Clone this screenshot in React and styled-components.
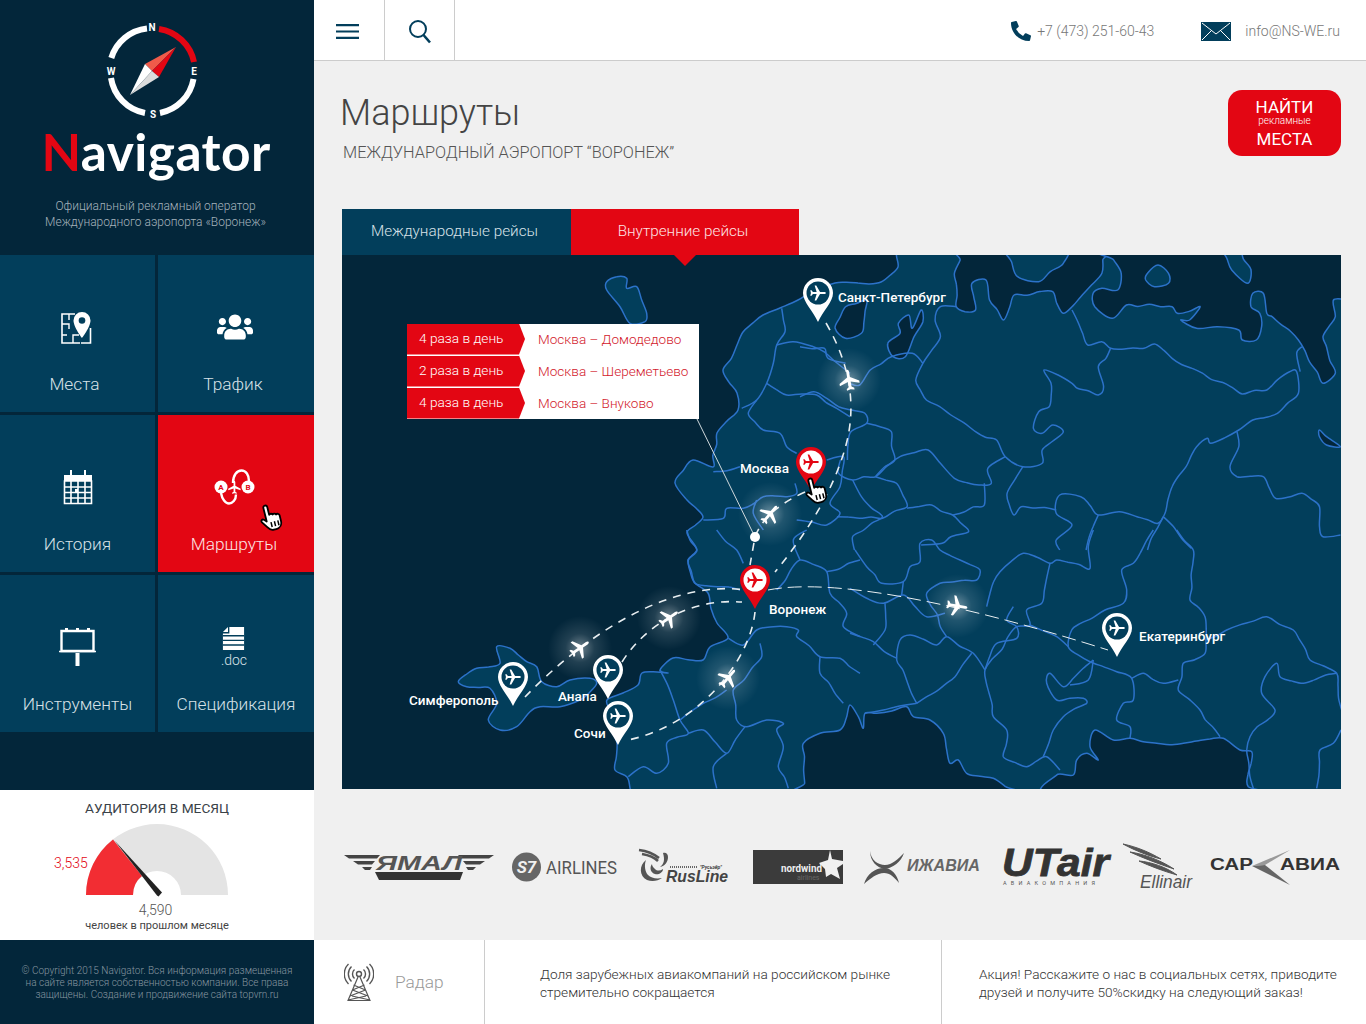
import React from "react";
import styled, { createGlobalStyle } from "styled-components";
import { FaUsers, FaPhoneAlt } from "react-icons/fa";

const NAVY = "#03263a";
const TEAL = "#023e5b";
const RED = "#e30613";
const BORDER = "#2c72c9";

const GlobalStyle = createGlobalStyle`
  html, body { margin: 0; padding: 0; background: #f0f0f0; }
  body { font-family: Roboto, "Liberation Sans", sans-serif; }
  * { box-sizing: border-box; }
`;

/* ---------- map geometry: points were read off zoomed crops, mapped back to page px ---------- */
const frame = (ox, oy, sx = 1 / 3, sy = 1 / 3) => (flat) => {
  const out = [];
  for (let i = 0; i < flat.length; i += 2) out.push([ox + flat[i] * sx, oy + flat[i + 1] * sy]);
  return out;
};
const f6 = frame(340, 200);
const f7 = frame(800, 250, 0.351);
const f8 = frame(340, 530);
const f9 = frame(850, 530);
const page = frame(0, 0, 1, 1);

// borders in the picture are wobbly, so long segments get small repeatable kinks
const noise = (x, y) => {
  const s = Math.sin(x * 12.9898 + y * 78.233) * 43758.5453;
  return (s - Math.floor(s)) * 2 - 1;
};
const rough = (pts) => {
  const out = [];
  pts.forEach((p, i) => {
    out.push(p);
    const q = pts[i + 1];
    if (!q) return;
    const dx = q[0] - p[0], dy = q[1] - p[1];
    const len = Math.hypot(dx, dy);
    const n = Math.floor(len / 11);
    for (let k = 1; k < n; k++) {
      const t = k / n;
      const x = p[0] + dx * t, y = p[1] + dy * t;
      const o = noise(x, y) * 1.7;
      out.push([x - (dy / len) * o, y + (dx / len) * o]);
    }
  });
  return out;
};

const smooth = (raw, close) => {
  const p = rough(raw);
  let d = `M${p[0][0].toFixed(1)} ${p[0][1].toFixed(1)}`;
  const n = p.length;
  const at = (i) => (close ? p[(i + n) % n] : p[Math.max(0, Math.min(n - 1, i))]);
  const last = close ? n : n - 1;
  for (let i = 0; i < last; i++) {
    const a = at(i - 1), b = at(i), c = at(i + 1), e = at(i + 2);
    const c1x = b[0] + (c[0] - a[0]) / 6, c1y = b[1] + (c[1] - a[1]) / 6;
    const c2x = c[0] - (e[0] - b[0]) / 6, c2y = c[1] - (e[1] - b[1]) / 6;
    d += `C${c1x.toFixed(1)} ${c1y.toFixed(1)} ${c2x.toFixed(1)} ${c2y.toFixed(1)} ${c[0].toFixed(1)} ${c[1].toFixed(1)}`;
  }
  return close ? d + "Z" : d;
};

const sea = [
  page([330,245, 896,245, 898,267, 881,282, 835,283, 815,290, 798,300, 780,308, 763,315, 743,332, 737,345, 723,370, 737,393, 738,410, 717,433, 713,467, 693,460, 675,483, 687,500, 703,517, 687,533, 697,550, 688,560, 695,583, 708,593, 717,623, 728,638, 710,647, 703,660, 673,658, 660,670, 668,673, 657,672, 642,673, 638,685, 623,693, 607,700, 617,743, 615,770, 627,777, 632,800, 330,800]),
  f7([470,-10, 440,70, 445,170, 470,185, 500,180, 490,100, 530,90, 540,150, 580,210, 610,135, 720,125, 750,190, 800,140, 860,70, 860,-10]),
  f7([870,-10, 915,70, 905,120, 860,115, 835,130, 840,170, 890,205, 930,165, 1060,170, 1075,190, 1140,170, 1110,210, 1085,210, 1130,235, 1190,230, 1250,240, 1260,270, 1300,270, 1315,230, 1310,190, 1285,170, 1290,130, 1320,130, 1330,190, 1345,200, 1420,270, 1490,400, 1525,370, 1500,290, 1490,260, 1525,200, 1520,150, 1560,145, 1560,-10]),
  f8([1395,800, 1390,640, 1440,610, 1500,600, 1530,525, 1555,560, 1570,595, 1575,550, 1610,550, 1700,530, 1720,560, 1770,570, 1810,610, 1830,700, 1855,690, 1880,730, 1960,745, 2030,800]),
  f9([620,800, 620,735, 670,735, 680,690, 710,670, 745,690, 720,650, 735,600, 790,630, 840,625, 920,640, 1000,640, 1120,625, 1170,660, 1205,665, 1195,770, 1250,800]),
  f7([100,235, 130,170, 190,150, 175,250, 130,265]),
  f7([250,280, 285,250, 280,220, 310,195, 320,235, 345,180, 350,215, 325,260, 300,320, 265,320]),
  f7([1480,540, 1500,560, 1540,590, 1500,585, 1480,560]),
];

const land = [
  f7([590,-10, 620,80, 680,95, 750,40, 755,-10]),
  f7([990,70, 1020,45, 1050,70, 1050,100, 1010,110, 985,90]),
  f7([1200,-10, 1230,60, 1275,100, 1285,60, 1250,-10]),
  f6([800,245, 830,230, 860,235, 860,265, 890,260, 905,300, 920,340, 915,365, 870,370, 840,320, 800,270]),
  f8([470,350, 510,355, 535,375, 560,395, 590,410, 605,455, 650,470, 690,450, 750,445, 770,460, 720,510, 660,530, 600,530, 570,545, 530,590, 480,600, 445,570, 470,520, 450,475, 380,470, 355,455, 410,415, 480,400]),
];

const borders = [
  f7([775,180, 820,285, 860,275, 885,295, 980,295, 1010,282, 1060,325, 1260,432, 1330,420, 1395,365, 1415,365, 1420,430, 1360,490, 1290,510, 1250,540, 1170,580, 1160,565, 1130,590, 1100,650, 1060,710, 1040,790, 1020,820, 960,800, 910,785, 850,795, 800,740, 740,735, 730,790, 775,825, 730,870, 740,900]),
  f7([445,170, 400,170, 385,210, 400,260, 350,340, 330,390, 360,450, 430,495, 500,545, 560,570, 585,620, 635,650, 690,640, 690,600, 750,545, 720,525, 690,550, 665,535, 680,485, 710,470, 715,400, 695,360, 775,400, 790,415, 850,435, 865,410, 850,350, 885,295]),
  f7([350,340, 320,310, 260,320, 200,360, 170,405, 140,400]),
  f7([585,620, 535,655, 545,700, 510,705, 440,685, 400,640, 365,600, 285,620, 215,680, 150,690, 110,670, 115,630]),
  f7([0,290, 70,295, 80,325, 130,340]),
  f7([0,440, 40,425, 110,470, 185,490, 190,520, 145,545, 135,630]),
  f7([190,520, 260,545, 270,630, 215,680]),
  f7([150,690, 175,740, 235,800, 150,860, 155,900]),
  f7([215,680, 275,700, 305,770, 235,805, 105,800]),
  f7([305,775, 375,765, 435,795, 480,845, 430,860, 405,880, 345,885]),
  f7([435,795, 525,765, 525,700]),
  f7([635,650, 590,730, 610,795, 630,770, 730,780]),
  f7([850,795, 815,900]),
  f7([1035,800, 990,900]),
  f7([1035,800, 1115,895]),
  f7([1430,290, 1415,310, 1425,365]),
  f7([1245,545, 1250,590, 1225,650, 1245,680, 1320,680, 1355,745, 1430,730, 1480,770, 1480,830, 1490,860, 1540,855]),
  f9([910,0, 850,100, 815,120, 830,180, 820,220, 765,240, 725,265, 665,300, 655,350, 720,395, 800,425, 845,445, 850,510, 820,520, 800,570, 840,590, 840,625]),
  f9([980,0, 1030,60, 1020,210, 1065,260, 1065,370, 1000,400, 985,480, 1050,540, 1110,620]),
  f9([1065,330, 1130,300, 1250,260, 1330,300, 1380,390, 1460,430, 1475,540]),
  f9([845,445, 880,430, 940,460, 985,450]),
  f9([1460,430, 1360,460, 1290,440, 1280,400, 1245,440, 1235,490, 1275,540, 1200,620, 1190,660, 1210,775]),
  f9([730,0, 715,50, 720,115, 620,90, 600,100, 520,70, 450,125, 420,190, 410,230]),
  f9([600,100, 575,220, 530,240, 540,285, 500,290, 405,420, 430,560, 470,600, 460,680, 530,710, 590,680, 630,720]),
  f9([540,285, 620,320, 655,350]),
  f9([490,230, 470,270, 500,290, 500,325, 440,340, 405,420]),
  f9([405,420, 370,370, 290,320, 260,345, 180,315, 150,330, 140,390, 200,520]),
  f9([290,320, 230,190, 270,160, 380,150, 390,120, 270,60, 245,30, 210,40, 210,95, 180,110, 160,155, 95,160, 50,110, 15,60]),
  f9([0,310, 70,335, 140,385]),
  f9([105,220, 105,300, 70,345]),
  f9([200,520, 315,440, 365,370]),
  f9([200,520, 100,540, 45,550]),
  f9([0,175, 50,205, 100,220, 160,195, 230,260, 285,250]),
  f9([160,155, 155,195]),
  f9([730,390, 640,470, 600,430, 590,460, 620,510, 700,505, 710,520, 640,560, 610,600, 580,680]),
  f9([730,390, 715,450, 660,465]),
  f9([1473,600, 1450,640, 1410,660, 1400,775]),
  f8([1040,0, 1070,60, 1045,90, 1065,160, 1200,180]),
  f8([1130,0, 1190,60, 1210,100]),
  f8([1260,340, 1265,380, 1180,480, 1190,570, 1220,590, 1280,570, 1330,580, 1310,600, 1330,650, 1315,710, 1345,775]),
  f8([1165,325, 1210,345, 1250,300, 1300,290, 1340,290, 1375,300, 1370,320, 1440,380, 1500,385, 1560,430]),
  f8([1440,380, 1440,430, 1510,520]),
  f8([1310,180, 1380,90, 1460,125, 1470,190, 1520,250, 1510,290, 1560,320]),
  f8([1460,125, 1560,90]),
  f8([1380,90, 1360,30, 1400,0]),
  f8([960,420, 1000,510, 1020,570, 1045,610, 980,640, 985,700, 950,730, 910,710, 865,740]),
  f8([1045,610, 1090,600, 1160,670, 1215,590]),
  f8([1160,670, 1120,710, 1130,775]),
  f8([1020,570, 1090,520, 1160,480]),
  f6([1325,325, 1335,395, 1310,435, 1300,490, 1280,550, 1250,600, 1205,625]),
  f6([1310,435, 1360,425, 1420,440, 1480,480, 1530,520]),
  f6([1280,550, 1340,585, 1430,585, 1490,625, 1530,650]),
  f6([1250,600, 1225,640, 1270,690, 1320,700, 1340,740, 1370,760]),
  f6([1120,815, 1200,800]),
  f6([1365,850, 1370,880, 1340,890, 1270,890, 1210,925, 1160,925, 1150,955, 1090,960]),
  f6([1460,780, 1510,770, 1500,860, 1470,910, 1500,940, 1460,975, 1370,960]),
  f6([1250,900, 1240,940, 1270,990]),
];

const routes = [
  "M826 323Q862 385 846 445T775 572",
  "M805 492Q765 510 755 537L750 565",
  "M755 612C750 660 700 725 628 740",
  "M525 697C570 650 660 578 745 590",
  "M622 662C645 625 690 598 742 602",
];

const planes = [
  { x: 849, y: 380, r: -10 },
  { x: 770, y: 514, r: 40 },
  { x: 957, y: 606, r: 100 },
  { x: 669, y: 618, r: 55 },
  { x: 580, y: 648, r: 55 },
  { x: 728, y: 678, r: 40 },
];

const pins = [
  { x: 818, y: 293 },
  { x: 811, y: 462, red: true },
  { x: 755, y: 580, red: true },
  { x: 1117, y: 628 },
  { x: 513, y: 677 },
  { x: 608, y: 670 },
  { x: 618, y: 716 },
];

const cities = [
  { name: "Санкт-Петербург", x: 838, y: 302 },
  { name: "Москва", x: 740, y: 473 },
  { name: "Воронеж", x: 769, y: 614 },
  { name: "Екатеринбург", x: 1139, y: 641 },
  { name: "Симферополь", x: 409, y: 705 },
  { name: "Анапа", x: 558, y: 701 },
  { name: "Сочи", x: 574, y: 738 },
];

const schedule = [
  { freq: "4 раза в день", route: "Москва – Домодедово" },
  { freq: "2 раза в день", route: "Москва – Шереметьево" },
  { freq: "4 раза в день", route: "Москва – Внуково" },
];

const PLANE = "M12 1.5c.9 0 1.4 1.1 1.4 2.2v5.6l8.6 5v2.2l-8.6-2.7v5l2.4 1.8v1.7L12 21.4l-3.8.9v-1.7l2.4-1.8v-5L2 16.5v-2.2l8.6-5V3.7c0-1.1.5-2.2 1.4-2.2z";

/* ---------- layout ---------- */
const Page = styled.div`
  width: 1366px;
  height: 1024px;
  overflow: hidden;
  display: grid;
  grid-template-columns: 314px 1fr;
  background: #f0f0f0;
`;

const Sidebar = styled.aside`
  background: ${NAVY};
  display: flex;
  flex-direction: column;
`;

const Brand = styled.div`
  height: 255px;
  padding-top: 22px;
  display: flex;
  flex-direction: column;
  align-items: center;
  svg { margin-left: -10px; }
`;

const BrandName = styled.div`
  font-family: Lato, sans-serif;
  font-weight: 700;
  font-size: 51.5px;
  line-height: 58px;
  margin: 0 0 0 -2px;
  color: #fff;
  letter-spacing: 0.4px;
  span { color: ${RED}; }
`;

const Tagline = styled.p`
  margin: 18px 0 0 -3px;
  font-size: 12px;
  font-weight: 300;
  line-height: 16px;
  text-align: center;
  color: #a5b3bc;
`;

const Tiles = styled.nav`
  display: grid;
  grid-template-columns: 155px 156px;
  grid-auto-rows: 157px;
  gap: 3px;
  height: 477px;
  margin-bottom: 58px;
`;

const Tile = styled.a`
  position: relative;
  display: flex;
  flex-direction: column;
  align-items: center;
  padding-top: 52px;
  background: ${(p) => (p.$active ? RED : TEAL)};
  color: ${(p) => (p.$active ? "#fde3e4" : "#d8e2e8")};
`;

const TileIcon = styled.div`
  height: 40px;
  margin-left: ${(p) => p.$shift || 0}px;
  display: flex;
  flex-direction: column;
  align-items: center;
  justify-content: center;
  color: #fff;
`;

const TileLabel = styled.span`
  margin-top: 25px;
  margin-left: ${(p) => p.$shift || 0}px;
  font-size: 17.3px;
  font-weight: 300;
  line-height: 24px;
  white-space: nowrap;
`;

const DocExt = styled.span`
  font-size: 14px;
  font-weight: 300;
  line-height: 14px;
  margin-top: 3px;
  color: #d8e2e8;
`;

const TileCursor = styled.svg`
  position: absolute;
  left: 100px;
  top: 88px;
`;

const Audience = styled.section`
  height: 150px;
  background: #fff;
  padding-top: 9px;
  display: flex;
  flex-direction: column;
  align-items: center;
`;

const AudienceTitle = styled.div`
  font-size: 13.7px;
  line-height: 18px;
  font-weight: 400;
  color: #3a4248;
`;

const Gauge = styled.div`
  position: relative;
  margin-top: 7px;
  height: 71px;
  svg { display: block; }
`;

const GaugeValue = styled.span`
  position: absolute;
  left: -30px;
  top: 31px;
  font-size: 14px;
  font-weight: 300;
  color: ${RED};
`;

const Previous = styled.div`
  margin: 6px 0 0 -3px;
  font-size: 14px;
  line-height: 18px;
  font-weight: 300;
  color: #555;
`;

const PreviousCaption = styled.div`
  font-size: 11px;
  line-height: 14px;
  color: #444;
`;

const Copyright = styled.footer`
  height: 84px;
  padding: 25px 18px 0;
  text-align: center;
  font-size: 10px;
  font-weight: 300;
  line-height: 12px;
  color: #8796a0;
`;

const Main = styled.main`
  display: flex;
  flex-direction: column;
  min-width: 0;
`;

const TopBar = styled.header`
  height: 61px;
  flex: none;
  background: #fff;
  border-bottom: 1px solid #ccc;
  display: flex;
  align-items: stretch;
`;

const TopButton = styled.button`
  width: 70px;
  padding: 2px 0 0;
  border: 0;
  border-right: 1px solid #ccc;
  background: none;
  display: flex;
  align-items: center;
  justify-content: center;
  &:first-child { width: 71px; padding: 2px 25px 0 22px; }
`;

const PhoneGlyph = styled(FaPhoneAlt)`
  color: ${TEAL};
`;

const Contacts = styled.div`
  margin-left: auto;
  padding: 2px 26px 0 0;
  display: flex;
  align-items: center;
  gap: 47px;
`;

const Contact = styled.div`
  display: flex;
  align-items: center;
  gap: ${(p) => p.$gap}px;
  font-size: 14px;
  font-weight: 300;
  color: #777;
`;

const Content = styled.div`
  flex: 1;
  padding: 29px 25px 0 28px;
  display: flex;
  flex-direction: column;
`;

const TitleRow = styled.div`
  height: 66px;
  display: flex;
  justify-content: space-between;
`;

const Title = styled.h1`
  margin: 0 0 0 -2px;
  padding-top: 2px;
  font-size: 36px;
  line-height: 42px;
  font-weight: 300;
  color: #444;
`;

const Subtitle = styled.div`
  margin-top: 9px;
  margin-left: 1px;
  font-size: 16.35px;
  line-height: 20px;
  font-weight: 300;
  color: #555;
`;

const FindButton = styled.a`
  width: 113px;
  height: 66px;
  background: ${RED};
  border-radius: 14px;
  color: #fff;
  display: flex;
  flex-direction: column;
  align-items: center;
  justify-content: center;
  font-size: 17px;
  font-weight: 400;
  line-height: 20px;
  small { font-size: 10px; font-weight: 300; line-height: 10px; margin: -1px 0 3px; }
`;

const Tabs = styled.div`
  margin-top: 53px;
  display: flex;
`;

const Tab = styled.a`
  position: relative;
  z-index: 1;
  width: ${(p) => p.$w}px;
  height: 46px;
  padding: 0 4px 2px 0;
  background: ${(p) => (p.$active ? RED : TEAL)};
  color: ${(p) => (p.$active ? "#fde3e4" : "#d8e2e8")};
  display: flex;
  align-items: center;
  justify-content: center;
  font-size: 15.3px;
  font-weight: 300;
  ${(p) =>
    p.$active &&
    `&::after {
      content: "";
      position: absolute;
      top: 100%;
      left: 50%;
      margin-left: -11px;
      border: 11px solid transparent;
      border-bottom: 0;
      border-top-color: ${RED};
    }`}
`;

const MapPanel = styled.div`
  position: relative;
  height: 534px;
  background: ${TEAL};
  overflow: hidden;
  > svg { display: block; }
`;

const CityLabel = styled.text`
  font-family: Roboto, sans-serif;
  font-size: 13.5px;
  font-weight: 500;
  fill: #fff;
`;

const ScheduleCard = styled.div`
  position: absolute;
  left: 65px;
  top: 69px;
  width: 292px;
  background: #fff;
  display: flex;
  flex-direction: column;
  gap: 1px;
`;

const ScheduleRow = styled.div`
  height: 31px;
  padding-bottom: 1px;
  display: flex;
  align-items: center;
`;

const Frequency = styled.span`
  width: 118px;
  height: 31px;
  padding: 0 0 2px 12px;
  display: flex;
  align-items: center;
  background: ${RED};
  color: #fff;
  font-size: 13.7px;
  font-weight: 300;
  clip-path: polygon(0 0, 112px 0, 118px 50%, 112px 100%, 0 100%);
`;

const RouteName = styled.span`
  margin: 0 0 1px 13px;
  font-size: 13.55px;
  font-weight: 300;
  color: #d2202c;
  white-space: nowrap;
`;

const Airlines = styled.div`
  flex: 1;
  padding: 5px 0 0 2px;
  display: flex;
  align-items: center;
  svg { display: block; overflow: visible; }
`;

const LogoSlot = styled.div`
  flex: none;
  margin-right: ${(p) => p.$gap}px;
`;

const BottomBar = styled.div`
  height: 84px;
  flex: none;
  background: #fff;
  display: flex;
`;

const RadarCell = styled.div`
  width: 171px;
  padding-left: 30px;
  border-right: 1px solid #ccc;
  display: flex;
  align-items: center;
  gap: 21px;
  font-size: 17.3px;
  font-weight: 300;
  color: #999;
`;

const NewsCell = styled.div`
  width: ${(p) => p.$w}px;
  padding: 2px 0 0 ${(p) => p.$pad}px;
  border-right: ${(p) => (p.$line ? "1px solid #ccc" : "0")};
  display: flex;
  align-items: center;
  font-size: 13.65px;
  font-weight: 300;
  line-height: 18px;
  color: #333;
  white-space: nowrap;
`;

const LogoText = styled.text`
  font-family: ${(p) => p.$font || "Roboto, sans-serif"};
  font-size: ${(p) => p.$size}px;
  font-weight: ${(p) => p.$weight || 700};
  font-style: ${(p) => (p.$italic ? "italic" : "normal")};
  fill: ${(p) => p.$fill || "#444"};
`;

/* ---------- drawings ---------- */
const Compass = () => (
  <svg width="100" height="100" viewBox="0 0 100 100">
    <g fill="none" strokeWidth="6">
      <path d="M45 6.500A42 42 0 0 0 9.300 36" stroke="#fff" />
      <path d="M9 56A42 42 0 0 0 43 91" stroke="#fff" />
      <path d="M58 91A42 42 0 0 0 91.500 57" stroke="#fff" />
      <path d="M57 7A42 42 0 0 1 92 40" stroke={RED} />
    </g>
    <g fill="#fff" fontFamily="Roboto, sans-serif" fontWeight="700" fontSize="10" textAnchor="middle">
      <text x="50" y="9">N</text>
      <text x="92" y="53">E</text>
      <text x="9" y="53">W</text>
      <text x="51" y="96">S</text>
    </g>
    <path d="M74 25L43 42 50 49z" fill="#ef5b4a" />
    <path d="M74 25L57 55 50 49z" fill={RED} />
    <path d="M28 73L43 42 50 49z" fill="#fff" />
    <path d="M28 73L57 55 50 49z" fill="#dcdcdc" />
  </svg>
);

const HandGlyph = () => (
  <g transform="rotate(-14 13 15)">
    <path
      d="M8 3.500a2 2 0 0 1 4 0v8a2 2 0 0 1 3.400.6 2 2 0 0 1 3.300.8 2 2 0 0 1 3.300 1.500v5.600c0 4-2.400 7-6.500 7h-2.500c-3 0-4.400-1.500-5.800-4l-4-6c-1-1.800 1-3.300 2.500-2l2.300 2.300z"
      fill="#fff"
      stroke="#000"
      strokeWidth="1.800"
      strokeLinejoin="round"
    />
    <path d="M12 19v5M15.500 19v5M19 19v5" stroke="#000" strokeWidth="1.500" />
  </g>
);

const PlacesIcon = () => (
  <svg width="32" height="33" viewBox="0 0 32 33" fill="none">
    <path d="M20 32H2V3h13M21 32h9.500V17" stroke="#fff" strokeWidth="1.600" />
    <path d="M2 13h7v5M2 24h5M9 3v6M13 32v-8h6" stroke="#fff" strokeWidth="1.400" />
    <path d="M22 1a8.500 8.500 0 0 0-8.500 8.500C13.500 16 22 27 22 27s8.500-11 8.500-17.500A8.500 8.500 0 0 0 22 1z" fill="#fff" />
    <circle cx="22" cy="9.500" r="3.300" fill={TEAL} />
  </svg>
);

const CalendarIcon = () => (
  <svg width="30" height="35" viewBox="0 0 30 35">
    <path d="M1 5h28v6H1z" fill="#fff" />
    <path d="M7 0h2v7H7zM21 0h2v7h-2z" fill="#fff" />
    <path d="M1.500 11h27v22.500h-27z" fill="none" stroke="#fff" strokeWidth="1.600" />
    <path d="M1 17h28M1 22.500h28M1 28h28M8 11v22M15 11v22M22 11v22" stroke="#fff" strokeWidth="1.600" />
    <path d="M12 19h3v3h-3z" fill="#fff" />
  </svg>
);

const RouteIcon = () => (
  <svg width="41" height="36" viewBox="0 0 41 36" fill="none">
    <path d="M19 14C19 6 23 1.500 27.500 1.500S35 6 35 12M7 24c1 6 4.500 10.500 8 10.500s7-3.500 7-9" stroke="#fff" strokeWidth="2.400" />
    <circle cx="7" cy="18" r="6.500" fill="#fff" />
    <circle cx="34" cy="18" r="6.500" fill="#fff" />
    <path d={PLANE} transform="translate(13 11) scale(.62)" fill="#fff" />
    <text x="7" y="21" fontFamily="Roboto, sans-serif" fontSize="8" fontWeight="700" textAnchor="middle" fill={RED}>A</text>
    <text x="34" y="21" fontFamily="Roboto, sans-serif" fontSize="8" fontWeight="700" textAnchor="middle" fill={RED}>B</text>
  </svg>
);

const BillboardIcon = () => (
  <svg width="37" height="38" viewBox="0 1 37 38" fill="none">
    <path d="M2.500 4h32v20h-32z" stroke="#fff" strokeWidth="2.400" />
    <path d="M0 24.500h37" stroke="#fff" strokeWidth="1.600" />
    <path d="M16.500 26h4v13h-4z" fill="#fff" />
    <path d="M6 1h3v2H6zM17 1h3v2h-3zM28 1h3v2h-3z" fill="#fff" />
  </svg>
);

const DocIcon = () => (
  <svg width="23" height="25" viewBox="0 0 23 25">
    <path d="M7 0h16v25H0V7h7z" fill="#fff" />
    <path d="M0 5.500L5.500 0v5.500z" fill="#fff" />
    <path d="M0 9.500h23M0 14.500h23M0 19.500h23" stroke={TEAL} strokeWidth="1.500" />
  </svg>
);

const HamburgerIcon = () => (
  <svg width="25" height="17" viewBox="0 0 25 17">
    <path d="M0 1.500h25M0 8.500h25M0 15.500h25" stroke={TEAL} strokeWidth="2.400" />
  </svg>
);

const SearchIcon = () => (
  <svg width="24" height="25" viewBox="0 0 24 25" fill="none" stroke={TEAL} strokeWidth="2">
    <circle cx="10" cy="10" r="8" />
    <path d="M15.500 16L22 23.500" strokeWidth="2.600" />
  </svg>
);

const MailIcon = () => (
  <svg width="30" height="19" viewBox="0 0 30 19">
    <rect width="30" height="19" fill={TEAL} />
    <path d="M1 1l14 11L29 1M1 18l9-9M29 18l-9-9" fill="none" stroke="#fff" strokeWidth="1" />
  </svg>
);

const RadarIcon = () => (
  <svg width="30" height="38" viewBox="0 0 30 38" fill="none" stroke="#555" strokeWidth="1.400">
    <circle cx="15" cy="11" r="2.500" />
    <path d="M10.500 6.500a6 6 0 0 0 0 9M19.500 6.500a6 6 0 0 1 0 9M7.500 3.500a10.500 10.500 0 0 0 0 15M22.500 3.500a10.500 10.500 0 0 1 0 15M4.500 1a14 14 0 0 0 0 20M25.500 1a14 14 0 0 1 0 20" />
    <path d="M14 14L4 37.500h22L16 14M8.500 27l12-5M21.500 27l-12-5M6 33l15.500-6M24 33L8.500 27M4 37l18-4M26 37L8 33" strokeWidth="1.200" />
  </svg>
);

const GaugeChart = () => (
  <svg width="146" height="71" viewBox="84 822 146 71" overflow="visible">
    <path d="M86 893A71 71 0 0 1 228 893H181A24 24 0 0 0 133 893z" fill="#e4e4e4" />
    <path d="M86 893A71 71 0 0 1 113 837.400L142 874A24 24 0 0 0 133 893z" fill="#f22d33" />
    <path d="M114.500 838.500L162 890.500 158.500 894.500 157 893.500z" fill="#222" />
  </svg>
);

/* logos: drawn mark + real text squeezed to the logo's measured width */
const YamalLogo = () => (
  <svg width="150" height="30" viewBox="0 0 150 30">
    <path d="M0 3h36L33 6.500H5zM9 9h22l-3 3.500H14zM18 15h10l-2 3h-5zM150 3h-36l3 3.500h28zM141 9h-22l3 3.500h14zM132 15h-10l2 3h5z" fill="#444" />
    <path d="M31 20h88l-3 8H35z" fill="#333" />
    <LogoText x="32" y="18" $font="'Liberation Sans', sans-serif" $size={21} $italic $fill="#555" textLength="86" lengthAdjust="spacingAndGlyphs">ЯМАЛ</LogoText>
  </svg>
);

const S7Logo = () => (
  <svg width="106" height="30" viewBox="0 0 106 30">
    <circle cx="14.500" cy="15" r="14.500" fill="#666" />
    <LogoText x="14.500" y="21" textAnchor="middle" $size={17} $italic $fill="#f0f0f0">S7</LogoText>
    <LogoText x="34" y="22" $size={19} $weight={400} $fill="#555" textLength="71" lengthAdjust="spacingAndGlyphs">AIRLINES</LogoText>
  </svg>
);

const RusLineLogo = () => (
  <svg width="92" height="36" viewBox="0 0 92 36" fill="none">
    <path d="M1 1c8 1 15 4 20 8M4 5c6 1 12 3 16 7" stroke="#555" strokeWidth="2.500" />
    <path d="M8 11C1 16 1 27 9 31c5 2 11 1 15-2-6 1-11 0-14-3S6 16 8 11z" fill="#555" />
    <path d="M14 15c-3 4-1 9 3 10 3 1 8-1 8-5-3 2-6 2-8 0s-3-3-3-5zM25 4c3-1 5 1 5 4 0 5-3 9-8 10 4-3 5-7 3-14z" fill="#555" />
    <LogoText x="28" y="33" $size={17} $italic $font="'Liberation Sans', sans-serif" $fill="#444" textLength="62" lengthAdjust="spacingAndGlyphs">RusLine</LogoText>
    <path d="M32 18h28" stroke="#666" strokeDasharray="1 1" strokeWidth="2" />
    <LogoText x="62" y="20" $size={5} $italic $fill="#444">"Русьэйр"</LogoText>
  </svg>
);

const NordwindLogo = () => (
  <svg width="90" height="34" viewBox="0 0 90 34">
    <rect width="90" height="34" fill="#3b3b3b" />
    <path d="M77 0l2 9 11 2v3l-6 4 3 11-9-5-5 3-1-8-6-6 9-3z" fill="#f0f0f0" />
    <LogoText x="28" y="22" $size={10} $fill="#eee" textLength="41" lengthAdjust="spacingAndGlyphs">nordwind</LogoText>
    <LogoText x="44" y="30" $size={7} $weight={400} $fill="#666">airlines</LogoText>
  </svg>
);

const IzhaviaLogo = () => (
  <svg width="116" height="36" viewBox="0 0 116 36" fill="none">
    <path d="M6 2c1 9 8 14 15 14S34 10 40 4c-3 9-11 15-19 16C13 19 6 12 6 2z" fill="#555" />
    <path d="M0 35c3-10 11-16 20-16 8 0 13 7 15 15-5-6-9-10-15-10-7 0-13 5-20 11z" fill="#555" />
    <LogoText x="43" y="22" $size={16} $italic $font="'Liberation Sans', sans-serif" $fill="#666" textLength="73" lengthAdjust="spacingAndGlyphs">ИЖАВИА</LogoText>
  </svg>
);

const UtairLogo = () => (
  <svg width="108" height="38" viewBox="0 0 108 38">
    <LogoText x="0" y="28" $size={38} $italic $font="'Liberation Sans', sans-serif" $fill="#333" stroke="#333" strokeWidth=".8" textLength="107" lengthAdjust="spacingAndGlyphs">UTair</LogoText>
    <LogoText x="1" y="37" $size={5.500} $weight={400} $fill="#555" textLength="92" lengthAdjust="spacing">АВИАКОМПАНИЯ</LogoText>
  </svg>
);

const EllinairLogo = () => (
  <svg width="69" height="46" viewBox="0 0 69 46">
    <path d="M0 0c14 3 26 8 38 15C26 12 13 7 0 0zM7 8c14 2 30 8 44 17C36 20 20 14 7 8zM16 17c12 1 27 6 38 14C40 27 27 22 16 17z" fill="#555" stroke="#555" />
    <LogoText x="17" y="44" $size={18} $weight={400} $italic $font="'Liberation Sans', sans-serif" $fill="#555" textLength="52" lengthAdjust="spacingAndGlyphs">Ellinair</LogoText>
  </svg>
);

const SaravLogo = () => (
  <svg width="130" height="38" viewBox="0 0 130 38">
    <LogoText x="0" y="22" $size={16} $font="'Liberation Sans', sans-serif" $fill="#333" textLength="43" lengthAdjust="spacingAndGlyphs">САР</LogoText>
    <LogoText x="70" y="22" $size={16} $font="'Liberation Sans', sans-serif" $fill="#333" textLength="60" lengthAdjust="spacingAndGlyphs">АВИА</LogoText>
    <path d="M42 18L80 2 55 17z" fill="#999" />
    <path d="M42 18l13-1 25 20z" fill="#666" />
  </svg>
);

const airlineLogos = [
  { id: "yamal", logo: <YamalLogo />, gap: 18 },
  { id: "s7", logo: <S7Logo />, gap: 20 },
  { id: "rusline", logo: <RusLineLogo />, gap: 23 },
  { id: "nordwind", logo: <NordwindLogo />, gap: 21 },
  { id: "izhavia", logo: <IzhaviaLogo />, gap: 22 },
  { id: "utair", logo: <UtairLogo />, gap: 13 },
  { id: "ellinair", logo: <EllinairLogo />, gap: 18 },
  { id: "saratov", logo: <SaravLogo />, gap: 0 },
];

const Geography = () => (
  <svg width="999" height="534" viewBox="342 255 999 534">
    <defs>
      <radialGradient id="glow">
        <stop offset="0" stopColor="#fff" stopOpacity=".42" />
        <stop offset=".45" stopColor="#fff" stopOpacity=".12" />
        <stop offset="1" stopColor="#fff" stopOpacity="0" />
      </radialGradient>
    </defs>
    {sea.map((p, i) => (
      <path key={i} d={smooth(p, true)} fill={NAVY} stroke={BORDER} strokeWidth="1.500" />
    ))}
    {land.map((p, i) => (
      <path key={i} d={smooth(p, true)} fill={TEAL} stroke={BORDER} strokeWidth="1.500" />
    ))}
    {borders.map((p, i) => (
      <path key={i} d={smooth(p, false)} fill="none" stroke={BORDER} strokeWidth="1.500" />
    ))}

    <path d="M697 419L755 537" stroke="#cfd8dc" strokeWidth="1" />
    <g fill="none" stroke="#e8eef1" strokeWidth="1.600" strokeDasharray="8 7">
      {routes.map((d) => (
        <path key={d} d={d} />
      ))}
      <path d="M768 590C830 578 950 600 1108 650" strokeWidth="1" strokeDasharray="14 6" />
    </g>
    <circle cx="755" cy="537" r="5" fill="#fff" />

    {planes.map((pl) => (
      <g key={pl.x} transform={`translate(${pl.x} ${pl.y})`}>
        <circle r="32" fill="url(#glow)" />
        <path d={PLANE} transform={`rotate(${pl.r}) translate(-12 -12)`} fill="#fff" />
      </g>
    ))}

    {pins.map((pin) => (
      <g key={pin.x} transform={`translate(${pin.x} ${pin.y})`}>
        <path d="M-15 0A15 15 0 1 1 15 0C15 9 5 18 0 29-5 18-15 9-15 0z" fill={pin.red ? RED : "#fff"} />
        <circle r="11.500" fill={pin.red ? "#fff" : TEAL} />
        <path d={PLANE} transform="rotate(90) translate(-9 -9) scale(.75)" fill={pin.red ? RED : "#fff"} />
      </g>
    ))}

    {cities.map((c) => (
      <CityLabel key={c.name} x={c.x} y={c.y}>{c.name}</CityLabel>
    ))}

    <g transform="translate(803 476)">
      <HandGlyph />
    </g>
  </svg>
);

const tiles = [
  { label: "Места", icon: <PlacesIcon />, iconShift: -3, labelShift: -6 },
  { label: "Трафик", icon: <FaUsers size={36} />, iconShift: -2, labelShift: -6 },
  { label: "История", icon: <CalendarIcon /> },
  { label: "Маршруты", icon: <RouteIcon />, active: true, iconShift: -4, labelShift: -4 },
  { label: "Инструменты", icon: <BillboardIcon /> },
  { label: "Спецификация", icon: <><DocIcon /><DocExt>.doc</DocExt></>, iconShift: -4 },
];

export default function App() {
  return (
    <Page>
      <GlobalStyle />
      <Sidebar>
        <Brand>
          <Compass />
          <BrandName><span>N</span>avigator</BrandName>
          <Tagline>
            Официальный рекламный оператор
            <br />
            Международного аэропорта «Воронеж»
          </Tagline>
        </Brand>
        <Tiles>
          {tiles.map((t) => (
            <Tile key={t.label} $active={t.active}>
              <TileIcon $shift={t.iconShift}>{t.icon}</TileIcon>
              <TileLabel $shift={t.labelShift}>{t.label}</TileLabel>
              {t.active && (
                <TileCursor width="26" height="30" viewBox="0 0 26 30">
                  <HandGlyph />
                </TileCursor>
              )}
            </Tile>
          ))}
        </Tiles>
        <Audience>
          <AudienceTitle>АУДИТОРИЯ В МЕСЯЦ</AudienceTitle>
          <Gauge>
            <GaugeValue>3,535</GaugeValue>
            <GaugeChart />
          </Gauge>
          <Previous>4,590</Previous>
          <PreviousCaption>человек в прошлом месяце</PreviousCaption>
        </Audience>
        <Copyright>
          © Copyright 2015 Navigator. Вся информация размещенная на сайте является собственностью компании. Все права защищены. Создание и продвижение сайта topvrn.ru
        </Copyright>
      </Sidebar>

      <Main>
        <TopBar>
          <TopButton><HamburgerIcon /></TopButton>
          <TopButton><SearchIcon /></TopButton>
          <Contacts>
            <Contact $gap={6}>
              <PhoneGlyph size={20} />
              +7 (473) 251-60-43
            </Contact>
            <Contact $gap={14}>
              <MailIcon />
              info@NS-WE.ru
            </Contact>
          </Contacts>
        </TopBar>

        <Content>
          <TitleRow>
            <div>
              <Title>Маршруты</Title>
              <Subtitle>МЕЖДУНАРОДНЫЙ АЭРОПОРТ “ВОРОНЕЖ”</Subtitle>
            </div>
            <FindButton>
              НАЙТИ
              <small>рекламные</small>
              МЕСТА
            </FindButton>
          </TitleRow>

          <Tabs>
            <Tab $w={229}>Международные рейсы</Tab>
            <Tab $w={228} $active>Внутренние рейсы</Tab>
          </Tabs>

          <MapPanel>
            <Geography />
            <ScheduleCard>
              {schedule.map((s) => (
                <ScheduleRow key={s.route}>
                  <Frequency>{s.freq}</Frequency>
                  <RouteName>{s.route}</RouteName>
                </ScheduleRow>
              ))}
            </ScheduleCard>
          </MapPanel>

          <Airlines>
            {airlineLogos.map((l) => (
              <LogoSlot key={l.id} $gap={l.gap}>{l.logo}</LogoSlot>
            ))}
          </Airlines>
        </Content>

        <BottomBar>
          <RadarCell>
            <RadarIcon />
            Радар
          </RadarCell>
          <NewsCell $w={457} $pad={55} $line>
            <span>
              Доля зарубежных авиакомпаний на российском рынке
              <br />
              стремительно сокращается
            </span>
          </NewsCell>
          <NewsCell $w={424} $pad={37}>
            <span>
              Акция! Расскажите о нас в социальных сетях, приводите
              <br />
              друзей и получите 50%скидку на следующий заказ!
            </span>
          </NewsCell>
        </BottomBar>
      </Main>
    </Page>
  );
}
